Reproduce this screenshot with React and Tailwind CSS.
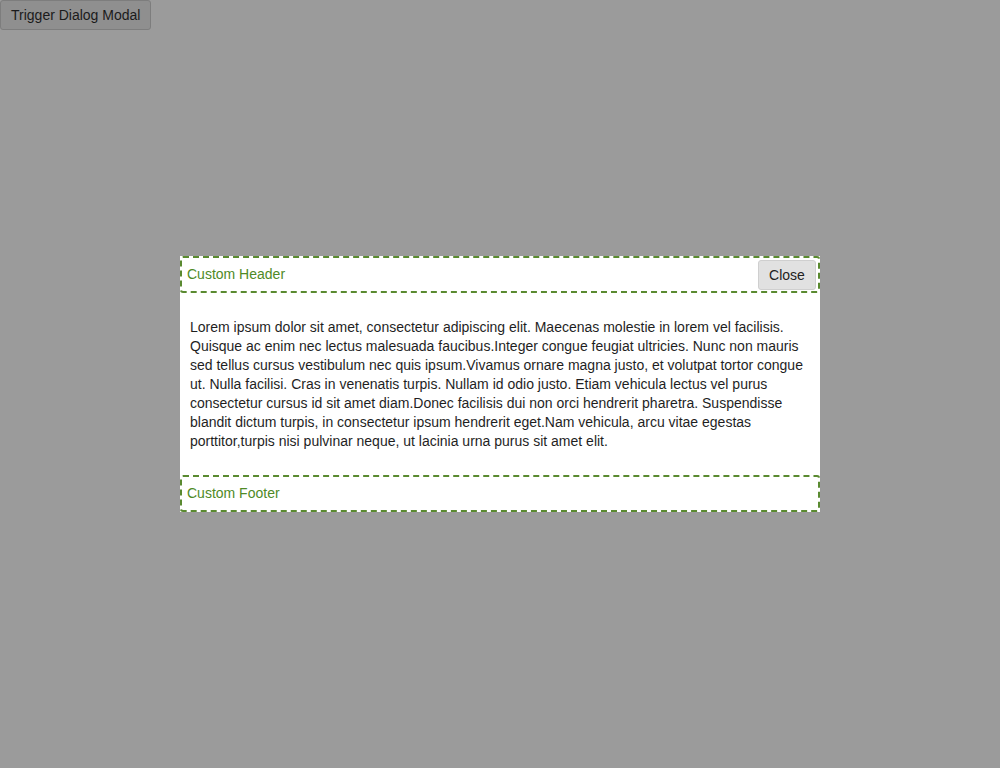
const LOREM =
  "Lorem ipsum dolor sit amet, consectetur adipiscing elit. Maecenas molestie in lorem vel facilisis. Quisque ac enim nec lectus malesuada faucibus.Integer congue feugiat ultricies. Nunc non mauris sed tellus cursus vestibulum nec quis ipsum.Vivamus ornare magna justo, et volutpat tortor congue ut. Nulla facilisi. Cras in venenatis turpis. Nullam id odio justo. Etiam vehicula lectus vel purus consectetur cursus id sit amet diam.Donec facilisis dui non orci hendrerit pharetra. Suspendisse blandit dictum turpis, in consectetur ipsum hendrerit eget.Nam vehicula, arcu vitae egestas porttitor,turpis nisi pulvinar neque, ut lacinia urna purus sit amet elit.";

function App() {
  return (
    <div
      className="relative h-[768px] w-full bg-[#9b9b9b] text-[14px]"
      style={{ fontFamily: '"Liberation Sans", Arial, sans-serif' }}
    >
      <button className="h-[30px] rounded-[3px] border border-[#7d7d7d] bg-[#8f8f8f] px-[10px] text-[14px] text-[#1b1b1b]">
        Trigger Dialog Modal
      </button>

      <div className="absolute left-[180px] top-[256px] w-[640px] bg-white">
        <div className="flex h-[37px] items-center justify-between rounded-[3px] border-2 border-dashed border-[#5a8a30] pl-[5px] pr-[2px]">
          <span className="text-[#4f8a27]">Custom Header</span>
          <button className="mt-[1px] h-[30px] w-[58px] rounded-[3px] border border-[#cfcfcf] bg-[#e1e1e1] pt-[1px] text-[14px] text-[#222]">
            Close
          </button>
        </div>
        <div className="h-[182px] px-[10px] pt-[25px] leading-[19px] text-[#1f1f1f]">
          {LOREM}
        </div>
        <div className="flex h-[37px] items-center rounded-[3px] border-2 border-dashed border-[#5a8a30] pl-[5px]">
          <span className="text-[#4f8a27]">Custom Footer</span>
        </div>
      </div>
    </div>
  );
}

export default App;
